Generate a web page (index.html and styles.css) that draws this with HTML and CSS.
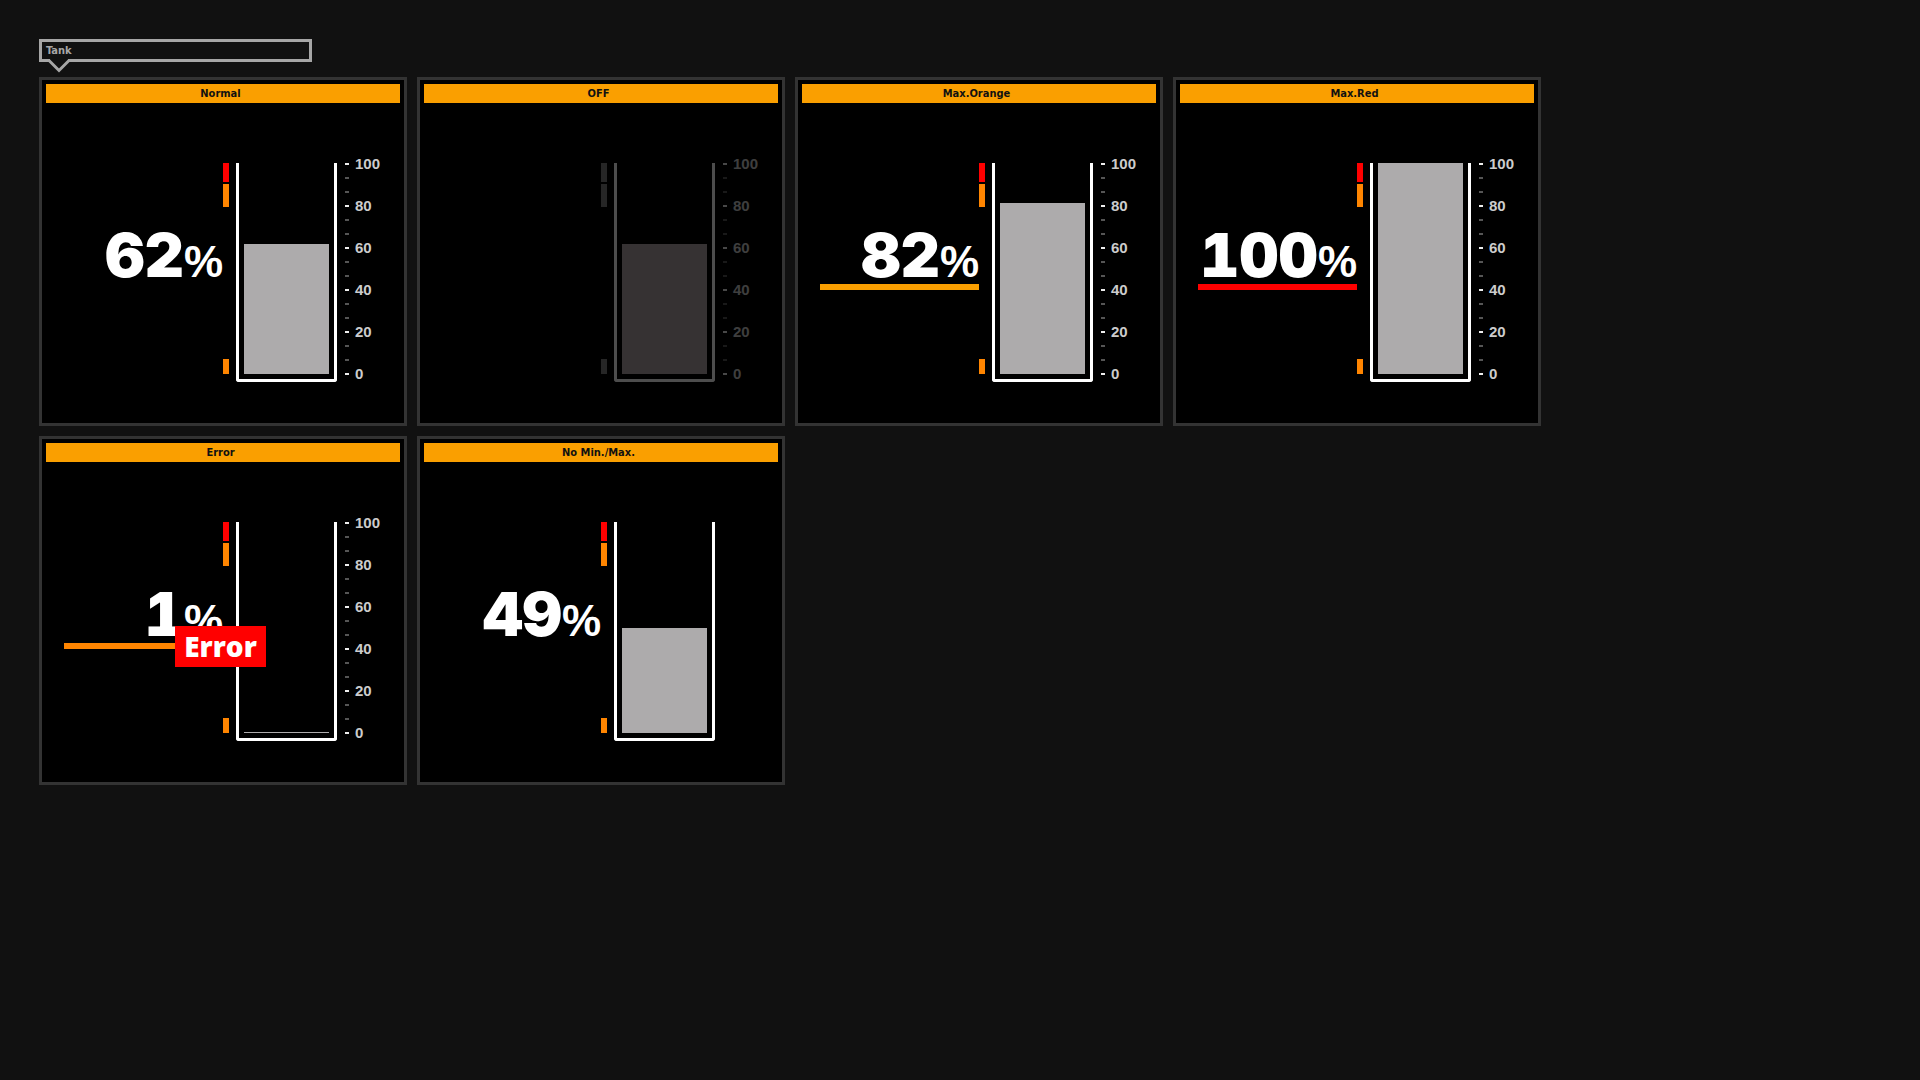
FILE: index.html
```html
<!DOCTYPE html>
<html lang="en">
<head>
<meta charset="utf-8">
<meta name="viewport" content="width=device-width, initial-scale=1">
<title>Tank</title>
<link rel="stylesheet" href="styles.css">
</head>
<body>
<main class="page">
  <header class="callout">
    <h1 class="callout-title">Tank</h1>
    <svg class="callout-tip" viewBox="0 0 22 14" aria-hidden="true"><path d="M2 0H20V2L11 11L2 2Z" fill="#111"/><path d="M1 1.5L11 11.5L21 1.5" fill="none" stroke="#a6a6a6" stroke-width="3"/></svg>
  </header>

  <div class="cards">
    <section class="card">
      <h2 class="card-title">Normal</h2>
      <div class="gauge">
        <p class="value">62<span class="unit">%</span></p>
        <div class="limits"><i class="limit limit-max"></i><i class="limit limit-high"></i><i class="limit limit-low"></i></div>
        <div class="vessel"><div class="fill" style="height:130px"></div></div>
        <ul class="scale"><li>100</li><li></li><li></li><li>80</li><li></li><li></li><li>60</li><li></li><li></li><li>40</li><li></li><li></li><li>20</li><li></li><li></li><li>0</li></ul>
      </div>
    </section>

    <section class="card card-off">
      <h2 class="card-title">OFF</h2>
      <div class="gauge">
        <p class="value"></p>
        <div class="limits"><i class="limit limit-max"></i><i class="limit limit-high"></i><i class="limit limit-low"></i></div>
        <div class="vessel"><div class="fill" style="height:130px"></div></div>
        <ul class="scale"><li>100</li><li></li><li></li><li>80</li><li></li><li></li><li>60</li><li></li><li></li><li>40</li><li></li><li></li><li>20</li><li></li><li></li><li>0</li></ul>
      </div>
    </section>

    <section class="card">
      <h2 class="card-title">Max.Orange</h2>
      <div class="gauge">
        <p class="value value-high">82<span class="unit">%</span></p>
        <div class="limits"><i class="limit limit-max"></i><i class="limit limit-high"></i><i class="limit limit-low"></i></div>
        <div class="vessel"><div class="fill" style="height:171px"></div></div>
        <ul class="scale"><li>100</li><li></li><li></li><li>80</li><li></li><li></li><li>60</li><li></li><li></li><li>40</li><li></li><li></li><li>20</li><li></li><li></li><li>0</li></ul>
      </div>
    </section>

    <section class="card">
      <h2 class="card-title">Max.Red</h2>
      <div class="gauge">
        <p class="value value-max">100<span class="unit">%</span></p>
        <div class="limits"><i class="limit limit-max"></i><i class="limit limit-high"></i><i class="limit limit-low"></i></div>
        <div class="vessel"><div class="fill" style="height:211px"></div></div>
        <ul class="scale"><li>100</li><li></li><li></li><li>80</li><li></li><li></li><li>60</li><li></li><li></li><li>40</li><li></li><li></li><li>20</li><li></li><li></li><li>0</li></ul>
      </div>
    </section>

    <section class="card">
      <h2 class="card-title">Error</h2>
      <div class="gauge">
        <p class="value value-low">1<span class="unit">%</span></p>
        <div class="limits"><i class="limit limit-max"></i><i class="limit limit-high"></i><i class="limit limit-low"></i></div>
        <div class="vessel"><div class="fill" style="height:1px"></div></div>
        <ul class="scale"><li>100</li><li></li><li></li><li>80</li><li></li><li></li><li>60</li><li></li><li></li><li>40</li><li></li><li></li><li>20</li><li></li><li></li><li>0</li></ul>
      </div>
      <strong class="error-badge">Error</strong>
    </section>

    <section class="card">
      <h2 class="card-title">No Min./Max.</h2>
      <div class="gauge">
        <p class="value">49<span class="unit">%</span></p>
        <div class="limits"><i class="limit limit-max"></i><i class="limit limit-high"></i><i class="limit limit-low"></i></div>
        <div class="vessel"><div class="fill" style="height:105px"></div></div>
      </div>
    </section>
  </div>
</main>
</body>
</html>
```
FILE: styles.css
```css
* { box-sizing: border-box; }

body {
  margin: 0;
  background: #111;
  color: #fff;
  font-family: "DejaVu Sans Condensed", "DejaVu Sans", sans-serif;
}

h1, h2, p, ul { margin: 0; padding: 0; }

.page { padding: 39px; }

.callout {
  position: relative;
  width: 273px;
  height: 23px;
  margin-bottom: 15px;
  padding: 0 4px;
  border: 3px solid #a6a6a6;
}

.callout-title {
  color: #a6a6a6;
  font-size: 11px;
  font-weight: 700;
  line-height: 17px;
}

.callout-tip {
  position: absolute;
  left: 6px;
  top: 17px;
  width: 22px;
  height: 14px;
}

.cards {
  display: grid;
  grid-template-columns: repeat(auto-fill, 368px);
  gap: 10px;
}

.card {
  position: relative;
  padding: 4px 4px 41px;
  border: 3px solid #333;
  background: #000;
}

.card-title {
  padding-right: 5px;
  background: #fa9f00;
  color: #111;
  font-size: 11px;
  font-weight: 700;
  line-height: 19px;
  text-align: center;
}

.gauge {
  display: flex;
  align-items: flex-start;
  padding: 54px 0 0 18px;
}

.value {
  width: 159px;
  height: 127px;
  margin-top: 6px;
  padding-top: 57px;
  border-bottom: 6px solid transparent;
  font: 900 61px/70px Inter, sans-serif;
  font-variant-numeric: tabular-nums;
  text-align: right;
  white-space: nowrap;
}

.unit {
  font: 700 44px/44px "Liberation Sans", Arial, sans-serif;
}

.value-high { border-color: #fa9f00; }
.value-max { border-color: #f00; }
.value-low { border-color: #ff8500; }

.limits {
  display: flex;
  flex-direction: column;
  width: 6px;
  height: 211px;
  margin: 6px 7px 0 0;
}

.limit-max { height: 19px; margin-bottom: 2px; background: #f00; }
.limit-high { height: 23px; background: #ff8500; }
.limit-low { height: 15px; margin-top: auto; background: #ff8500; }

.vessel {
  display: flex;
  align-items: flex-end;
  width: 101px;
  height: 219px;
  margin: 6px 8px 0 0;
  padding: 0 5px 5px;
  border: 3px solid #fff;
  border-top: 0;
  border-radius: 0 0 3px 3px;
}

.fill {
  width: 100%;
  background: #adabac;
}

.scale {
  list-style: none;
  color: #ccc;
  font: 700 15px/14px "Liberation Sans", Arial, sans-serif;
}

.scale li {
  display: flex;
  align-items: center;
  gap: 6px;
  height: 14px;
}

.scale li::before {
  content: "";
  width: 4px;
  height: 2px;
  background: #eee;
}

.scale li:empty::before { background: #555; }

.card-off .vessel { border-color: #4d4d4d; }
.card-off .fill { background: #363233; }
.card-off .limit { background: #262626; }
.card-off .scale { opacity: 0.3; }

.error-badge {
  position: absolute;
  left: 133px;
  top: 187px;
  width: 91px;
  background: #f00;
  font: 800 28px/41px "Open Sans", sans-serif;
  text-align: center;
}
```
